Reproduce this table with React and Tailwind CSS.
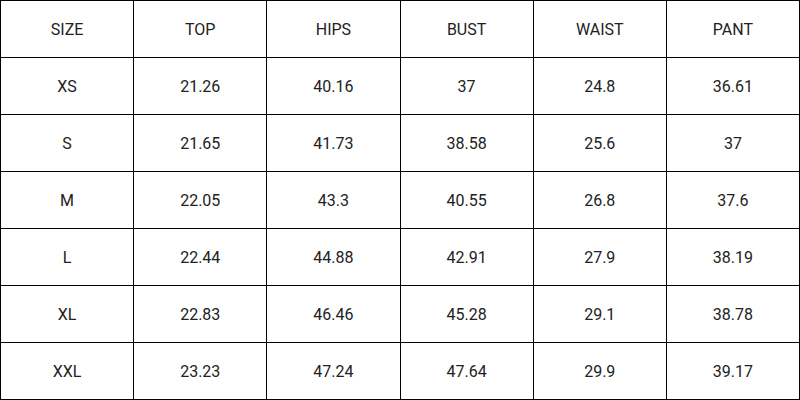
import React from 'react';

const headers = ['SIZE', 'TOP', 'HIPS', 'BUST', 'WAIST', 'PANT'];

const rows = [
  ['XS', '21.26', '40.16', '37', '24.8', '36.61'],
  ['S', '21.65', '41.73', '38.58', '25.6', '37'],
  ['M', '22.05', '43.3', '40.55', '26.8', '37.6'],
  ['L', '22.44', '44.88', '42.91', '27.9', '38.19'],
  ['XL', '22.83', '46.46', '45.28', '29.1', '38.78'],
  ['XXL', '23.23', '47.24', '47.64', '29.9', '39.17'],
];

const App = () => {
  const cells = [headers, ...rows];

  return (
    <div className="w-[800px] h-[400px] bg-white overflow-hidden">
      <div
        className="grid grid-cols-6 grid-rows-7 w-[800px] h-[400px] border-t border-l border-black text-[16px] text-[#222]"
        style={{ fontFamily: 'Roboto, "Liberation Sans", sans-serif' }}
      >
        {cells.map((row, i) =>
          row.map((cell, j) => (
            <div
              key={`${i}-${j}`}
              className="border-r border-b border-black flex items-center justify-center pt-[1px]"
            >
              {cell}
            </div>
          ))
        )}
      </div>
    </div>
  );
};

export default App;
